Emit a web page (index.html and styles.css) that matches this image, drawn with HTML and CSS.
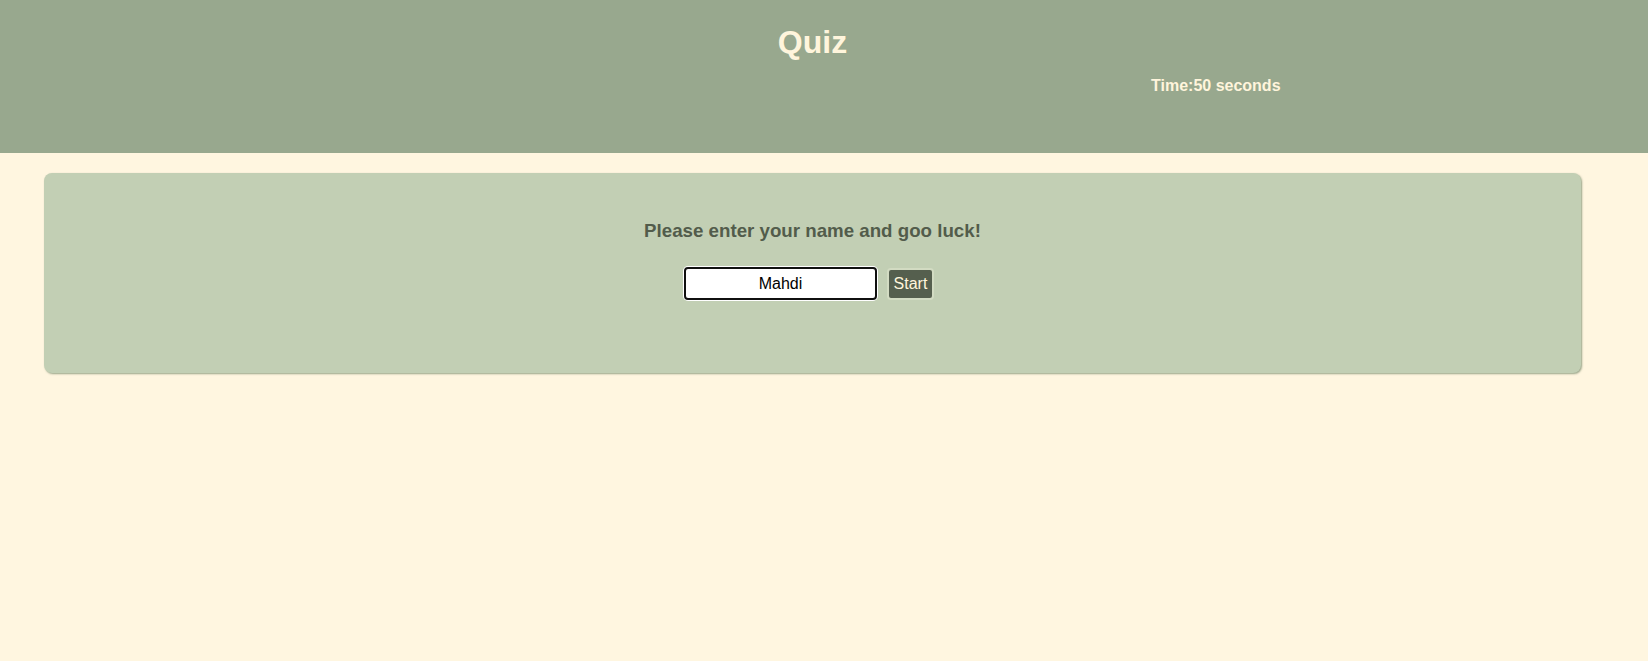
FILE: index.html
```html
<!DOCTYPE html>
<html lang="en">
<head>
<meta charset="utf-8">
<title>Quiz</title>
<link rel="stylesheet" href="styles.css">
</head>
<body>
<header class="top">
  <div class="top-inner">
    <h1 class="title">Quiz</h1>
    <p class="timer">Time:50 seconds</p>
  </div>
</header>
<main class="card">
  <h3 class="prompt">Please enter your name and goo luck!</h3>
  <div class="form-row">
    <input class="name-input" type="text" value="Mahdi" autofocus>
    <button class="start-btn" type="button">Start</button>
  </div>
</main>
<script>
  var i = document.querySelector('.name-input');
  i.focus();
  i.setSelectionRange(i.value.length, i.value.length);
</script>
</body>
</html>
```
FILE: styles.css
```css
html, body {
  margin: 0;
  padding: 0;
}
body {
  background: #fff6e0;
  font-family: "Liberation Sans", Arial, sans-serif;
  min-height: 661px;
}
.top {
  background: #98a88e;
  height: 153px;
  box-sizing: border-box;
  padding-top: 24px;
}
.top-inner {
  margin: 0 67px 0 44px;
}
.title {
  margin: 0;
  text-align: center;
  font-size: 32px;
  line-height: 37px;
  font-weight: bold;
  color: #fff5dc;
}
.timer {
  margin: 16px 0 0;
  padding-left: 1107px;
  font-size: 16px;
  line-height: 18px;
  font-weight: bold;
  color: #fff5dc;
}
.card {
  display: block;
  margin: 20px 67px 0 44px;
  height: 200px;
  box-sizing: border-box;
  padding-top: 47px;
  background: #c2cfb4;
  border-radius: 8px;
  box-shadow: 1px 1px 2px rgba(110, 130, 100, 0.7);
}
.prompt {
  margin: 0;
  text-align: center;
  font-size: 18.72px;
  line-height: 22px;
  font-weight: bold;
  color: #525c4b;
}
.form-row {
  display: flex;
  justify-content: center;
  align-items: flex-start;
  gap: 10px;
  margin-top: 25px;
  padding-right: 7px;
}
.name-input {
  width: 193px;
  height: 33px;
  box-sizing: border-box;
  border: 2px solid #101010;
  border-radius: 4px;
  background: #ffffff;
  box-shadow: 0 0 0 1px #ffffff;
  text-align: center;
  font-family: "Liberation Sans", Arial, sans-serif;
  font-size: 16px;
  color: #000000;
  padding: 0 4px;
  outline: none;
  caret-color: #000000;
}
.name-input:focus {
  outline: none;
}
.start-btn {
  margin-top: 1px;
  width: 47px;
  height: 32px;
  box-sizing: border-box;
  padding: 0;
  background: #555f4e;
  border: 2px solid #d2dbc2;
  border-radius: 4px;
  color: #fff5dc;
  font-family: "Liberation Sans", Arial, sans-serif;
  font-size: 16px;
}
```
